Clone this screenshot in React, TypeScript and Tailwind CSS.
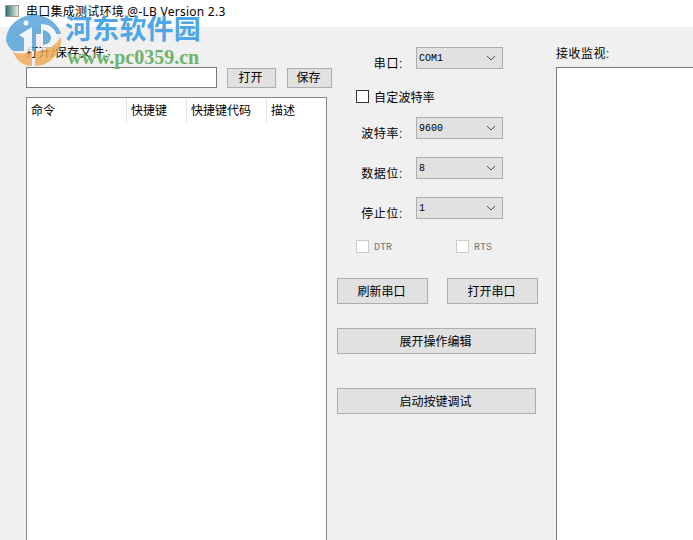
const cjk = "font-['Liberation_Sans','Noto_Sans_CJK_SC',sans-serif]"
const mono = "font-['Liberation_Mono','Noto_Sans_CJK_SC',monospace]"

function Btn({ label, className }: { label: string; className: string }) {
    return (
        <button className={`flex items-center justify-center bg-[#e1e1e1] border border-[#adadad] text-[12px] text-black pt-[1px] pr-[2px] ${className}`}>
            {label}
        </button>
    )
}

function Combo({ label, value, className }: { label: string; value: string; className: string }) {
    return (
        <div className={`flex items-start h-[22px] ${className}`}>
            <span className="w-[59px] pr-[13px] pt-[8px] text-right text-[12px] leading-[18px] tracking-[0.6px] whitespace-nowrap">{label}</span>
            <div className="flex items-center justify-between w-[87px] h-[22px] bg-[#e1e1e1] border border-[#adadad] pl-[2px] pr-[6px]">
                <span className={`${mono} text-[10px]`}>{value}</span>
                <svg width="10" height="6" viewBox="0 0 10 6" fill="none" stroke="#555" strokeWidth="1">
                    <path d="M1 1l4 4 4-4" />
                </svg>
            </div>
        </div>
    )
}

function Logo() {
    return (
        <svg width="58" height="54" viewBox="0 0 58 54" className="block opacity-80">
            <path d="M1 27 A28 26 0 0 1 56 21 L31 21 L31 38 L8 38 C4 35 2 31 1 27Z" fill="#4d9ed8" />
            <path d="M8 39 C14 41 20 41 27 39 L27 53 C18 53 12 48 8 39Z" fill="#f0a850" />
            <path d="M30 39 C42 37 51 32 56 24 C58 38 46 53 30 53Z" fill="#f0a850" />
            <path d="M36 11 C45 11 52 17 52 25 C52 31 47 35 36 37Z" fill="#f4f8fb" />
            <path d="M38 17 C43 18 46 21 46 25 C46 28 44 31 38 32Z" fill="#4d9ed8" />
            <path d="M14 22 L27 14 L27 38 L19 38 L19 25Z" fill="#f4f8fb" />
            <circle cx="21" cy="10" r="2.5" fill="#f4f8fb" />
        </svg>
    )
}

export default function App() {
    return (
        <div className={`relative w-[693px] h-[540px] overflow-hidden bg-[#f0f0f0] text-black ${cjk}`}>
            <div className="flex items-start h-[27px] bg-white">
                <div className="ml-[5px] mt-[5px] w-[14px] h-[12px] border border-[#9a9a9a] bg-[linear-gradient(90deg,#2f6f6f,#8fb0a0,#e8eef0)]"></div>
                <span className="ml-[7px] mt-[3px] text-[12px] leading-[17px] tracking-[0.25px] font-['Noto_Sans','Noto_Sans_CJK_SC',sans-serif]">串口集成测试环境 @-LB Version 2.3</span>
            </div>

            <div className="flex items-start">
                <div className="ml-[26px] w-[306px]">
                    <div className="h-[40px] pt-[18px] text-[12px] leading-[17px] tracking-[0.5px]">打开/保存文件:</div>
                    <div className="flex items-center">
                        <div className="w-[191px] h-[21px] bg-white border border-[#7a7a7a]"></div>
                        <Btn label="打开" className="ml-[10px] w-[49px] h-[20px]" />
                        <Btn label="保存" className="ml-[11px] w-[45px] h-[20px]" />
                    </div>
                    <div className="mt-[9px] w-[301px] h-[460px] bg-white border border-[#828790]">
                        <div className="flex h-[25px] text-[12px] leading-[17px]">
                            <div className="w-[100px] pl-[4px] pt-[5px] border-r border-[#e5e5e5]">命令</div>
                            <div className="w-[60px] pl-[4px] pt-[5px] border-r border-[#e5e5e5]">快捷键</div>
                            <div className="w-[80px] pl-[4px] pt-[5px] border-r border-[#e5e5e5]">快捷键代码</div>
                            <div className="pl-[4px] pt-[5px]">描述</div>
                        </div>
                    </div>
                </div>

                <div className="ml-[5px] w-[219px]">
                    <Combo label="串口:" value="COM1" className="mt-[20px] ml-[20px]" />
                    <label className="mt-[21px] ml-[19px] flex items-center h-[13px]">
                        <span className="w-[13px] h-[13px] bg-white border border-[#333]"></span>
                        <span className="ml-[5px] pt-[2px] text-[12px] tracking-[0.2px]">自定波特率</span>
                    </label>
                    <Combo label="波特率:" value="9600" className="mt-[14px] ml-[20px]" />
                    <Combo label="数据位:" value="8" className="mt-[18px] ml-[20px]" />
                    <Combo label="停止位:" value="1" className="mt-[18px] ml-[20px]" />
                    <div className="mt-[21px] ml-[19px] flex items-center h-[13px]">
                        <span className="w-[13px] h-[13px] bg-white border border-[#cccccc]"></span>
                        <span className={`${mono} ml-[5px] w-[82px] pt-[2px] text-[10px] text-[#777]`}>DTR</span>
                        <span className="w-[13px] h-[13px] bg-white border border-[#cccccc]"></span>
                        <span className={`${mono} ml-[5px] pt-[2px] text-[10px] text-[#777]`}>RTS</span>
                    </div>
                    <div className="mt-[25px] flex">
                        <Btn label="刷新串口" className="w-[91px] h-[26px]" />
                        <Btn label="打开串口" className="ml-[19px] w-[91px] h-[26px]" />
                    </div>
                    <Btn label="展开操作编辑" className="mt-[24px] w-[199px] h-[26px]" />
                    <Btn label="启动按键调试" className="mt-[34px] w-[199px] h-[26px]" />
                </div>

                <div className="flex-1">
                    <div className="h-[40px] pt-[19px] text-[12px] leading-[17px] tracking-[0.5px]">接收监视:</div>
                    <div className="h-[480px] bg-white border border-[#7a7a7a] border-r-0"></div>
                </div>
            </div>

            {/* site watermark sits over the window */}
            <div className="absolute left-[5px] top-[13px]">
                <Logo />
            </div>
            <div className="absolute left-[65px] top-[10px] font-['Liberation_Serif','Noto_Sans_CJK_SC',serif] font-bold text-[27px] leading-[40px] tracking-[0.2px] text-[#4ea6e6]">河东软件园</div>
            <div className="absolute left-[67px] top-[46px] font-['Liberation_Serif',serif] font-bold text-[20px] leading-[22px] text-[#6cb46c]">www.pc0359.cn</div>
        </div>
    )
}
